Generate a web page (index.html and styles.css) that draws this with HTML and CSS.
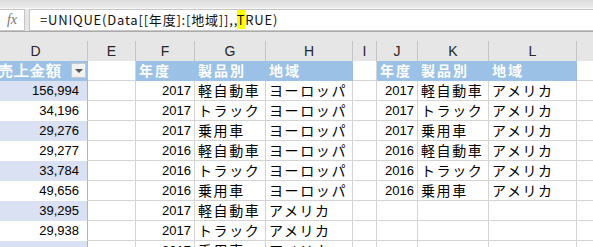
FILE: index.html
```
<!DOCTYPE html>
<html>
<head>
	<meta charset="utf-8">
	<title>UNIQUE</title>
	<link rel="stylesheet" href="styles.css">
</head>
<body>
<div id="app">
	<div class="top-edge"></div>
	<div class="formula-bar">
		<div class="fx">fx</div>
		<div class="formula">=UNIQUE(Data[[年度]:[地域]],,<span class="caret">T</span>RUE)</div>
	</div>

	<div class="sheet">
		<div class="ch">D</div><div class="ch">E</div><div class="ch">F</div><div class="ch">G</div><div class="ch">H</div>
		<div class="ch">I</div><div class="ch">J</div><div class="ch">K</div><div class="ch">L</div><div class="ch"></div>

		<div class="c amt th"><span>売上金額</span><span class="drop"></span></div>
		<div class="c"></div>
		<div class="c th">年度</div><div class="c th">製品別</div><div class="c th">地域</div>
		<div class="c"></div>
		<div class="c th">年度</div><div class="c th">製品別</div><div class="c th">地域</div>
		<div class="c"></div>

		<div class="c amt band">156,994</div><div class="c"></div>
		<div class="c num">2017</div><div class="c jp">軽自動車</div><div class="c jp">ヨーロッパ</div><div class="c"></div>
		<div class="c num">2017</div><div class="c jp">軽自動車</div><div class="c jp">アメリカ</div><div class="c"></div>

		<div class="c amt">34,196</div><div class="c"></div>
		<div class="c num">2017</div><div class="c jp">トラック</div><div class="c jp">ヨーロッパ</div><div class="c"></div>
		<div class="c num">2017</div><div class="c jp">トラック</div><div class="c jp">アメリカ</div><div class="c"></div>

		<div class="c amt band">29,276</div><div class="c"></div>
		<div class="c num">2017</div><div class="c jp">乗用車</div><div class="c jp">ヨーロッパ</div><div class="c"></div>
		<div class="c num">2017</div><div class="c jp">乗用車</div><div class="c jp">アメリカ</div><div class="c"></div>

		<div class="c amt">29,277</div><div class="c"></div>
		<div class="c num">2016</div><div class="c jp">軽自動車</div><div class="c jp">ヨーロッパ</div><div class="c"></div>
		<div class="c num">2016</div><div class="c jp">軽自動車</div><div class="c jp">アメリカ</div><div class="c"></div>

		<div class="c amt band">33,784</div><div class="c"></div>
		<div class="c num">2016</div><div class="c jp">トラック</div><div class="c jp">ヨーロッパ</div><div class="c"></div>
		<div class="c num">2016</div><div class="c jp">トラック</div><div class="c jp">アメリカ</div><div class="c"></div>

		<div class="c amt">49,656</div><div class="c"></div>
		<div class="c num">2016</div><div class="c jp">乗用車</div><div class="c jp">ヨーロッパ</div><div class="c"></div>
		<div class="c num">2016</div><div class="c jp">乗用車</div><div class="c jp">アメリカ</div><div class="c"></div>

		<div class="c amt band">39,295</div><div class="c"></div>
		<div class="c num">2017</div><div class="c jp">軽自動車</div><div class="c jp">アメリカ</div><div class="c"></div>
		<div class="c"></div><div class="c"></div><div class="c"></div><div class="c"></div>

		<div class="c amt">29,938</div><div class="c"></div>
		<div class="c num">2017</div><div class="c jp">トラック</div><div class="c jp">アメリカ</div><div class="c"></div>
		<div class="c"></div><div class="c"></div><div class="c"></div><div class="c"></div>

		<div class="c amt band"></div><div class="c"></div>
		<div class="c num">2017</div><div class="c jp">乗用車</div><div class="c jp">アメリカ</div><div class="c"></div>
		<div class="c"></div><div class="c"></div><div class="c"></div><div class="c"></div>
	</div>
</div>
</body>
</html>
```

FILE: styles.css
```
	body
	{
		margin: 0;
		background: #fff;
	}
	#app
	{
		width: 593px;
		height: 247px;
		overflow: hidden;
		background: #fff;
	}
	.top-edge
	{
		height: 8px;
		background: linear-gradient(#dcdcdc, #ececec);
		border-bottom: 1px solid #f6f6f6;
	}
	.formula-bar
	{
		display: flex;
		gap: 4px;
		height: 22px;
		background: #e6e6e6;
		border-bottom: 1px solid #ababab;
	}
	.fx
	{
		width: 25px;
		box-sizing: border-box;
		background: #fff;
		border: 1px solid #c6c6c6;
		border-left: 0;
		font-family: "Liberation Serif", serif;
		font-style: italic;
		font-size: 14px;
		color: #777;
		text-align: center;
		line-height: 19px;
	}
	.formula
	{
		flex: 1;
		background: #fff;
		border: 1px solid #c6c6c6;
		border-right: 0;
		padding-left: 10px;
		font-family: "Noto Sans CJK JP", sans-serif;
		font-size: 13px;
		letter-spacing: 0.8px;
		line-height: 20px;
		color: #111;
	}
	.caret
	{
		background: #ffff00;
	}
	.sheet
	{
		display: grid;
		grid-template-columns: 104px 48px 59px 71px 87px 24px 41px 71px 88px 60px;
		grid-auto-rows: 20px;
		margin-left: -16px;
		background: #e6e6e6;
		padding-top: 9px;
	}
	.ch
	{
		box-sizing: border-box;
		height: 21px;
		border-right: 1px solid #c4c4c4;
		border-bottom: 1px solid #ababab;
		font-family: "Liberation Sans", sans-serif;
		font-size: 14px;
		line-height: 21px;
		text-align: center;
		color: #262626;
	}
	.c
	{
		box-sizing: border-box;
		height: 20px;
		background: #fff;
		border-right: 1px solid #d4d4d4;
		border-bottom: 1px solid #d4d4d4;
		padding: 0 3px;
		white-space: nowrap;
		overflow: hidden;
		line-height: 19px;
		color: #000;
	}
	.th
	{
		background: #9bc2e6;
		border-color: #9bc2e6;
		color: #fff;
		font-family: "Noto Sans CJK JP", sans-serif;
		font-weight: bold;
		font-size: 14px;
		letter-spacing: 2px;
	}
	.amt
	{
		text-align: right;
		padding-right: 8px;
		border-right-color: #9fb4dc;
		border-bottom-color: transparent;
		font-family: "Liberation Sans", sans-serif;
		font-size: 13px;
	}
	.amt.th
	{
		display: flex;
		justify-content: flex-end;
		align-items: center;
		gap: 9px;
		padding-right: 1px;
		font-size: 15px;
		letter-spacing: 1px;
		border-right-color: #9bc2e6;
	}
	.drop
	{
		width: 15px;
		height: 15px;
		box-sizing: border-box;
		background: #f2f2f2;
		border: 1px solid #c8c8c8;
		position: relative;
	}
	.drop::after
	{
		content: "";
		position: absolute;
		left: 3px;
		top: 5px;
		border-left: 4px solid transparent;
		border-right: 4px solid transparent;
		border-top: 4px solid #555;
	}
	.band
	{
		background: #d9e1f2;
	}
	.num
	{
		text-align: right;
		padding-right: 3px;
		font-family: "Liberation Sans", sans-serif;
		font-size: 13px;
	}
	.jp
	{
		font-family: "Noto Sans CJK JP", sans-serif;
		font-size: 14px;
		letter-spacing: 1.6px;
	}
```
